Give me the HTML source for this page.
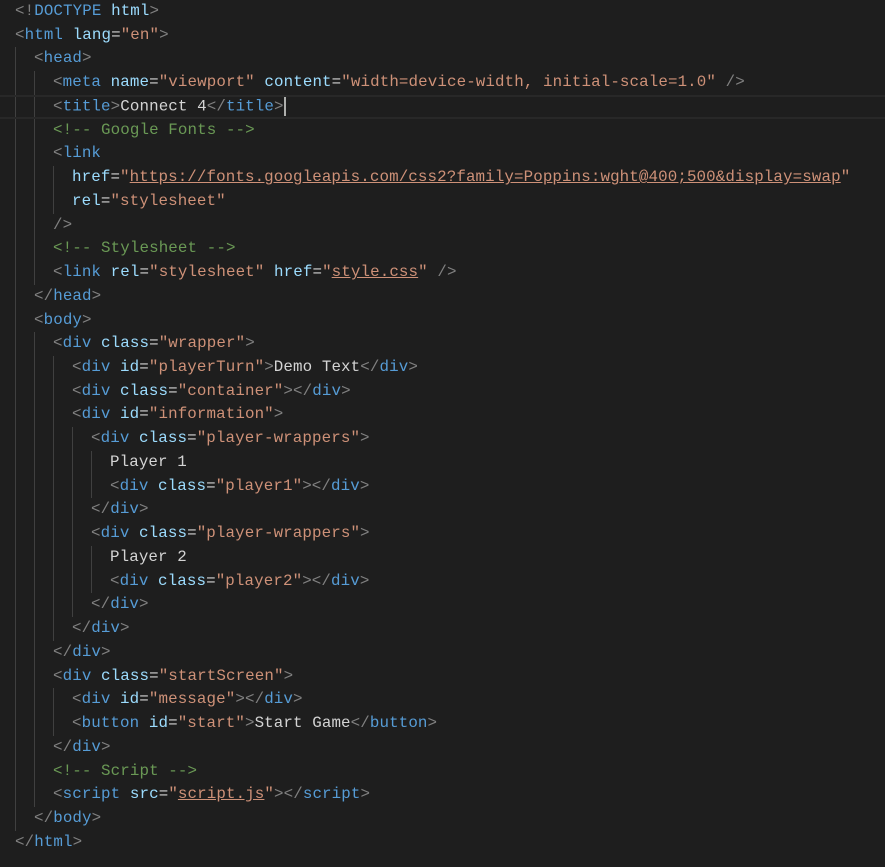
<!DOCTYPE html>
<html><head><style>
body{margin:0;background:#1e1e1e;width:885px;height:867px;overflow:hidden;}
#c{position:absolute;left:0;top:0px;font-family:"Liberation Mono",monospace;font-size:15.83px;letter-spacing:0.11px;line-height:23.74px;color:#d4d4d4;}
.l{height:23.74px;padding-left:15px;position:relative;box-sizing:border-box;white-space:pre}
.cur{border-top:2px solid #282828;border-bottom:2px solid #282828;width:885px;line-height:19.74px}
.i{display:inline-block;width:19px;letter-spacing:0;height:23.74px;vertical-align:top;box-shadow:inset 1px 0 0 #404040}
.cur .i{height:19.74px}
.p{color:#808080}.t{color:#569cd6}.a{color:#9cdcfe}.s{color:#ce9178}.c{color:#6a9955}
.u{text-decoration:underline}
.caret{display:inline-block;width:2px;height:19px;background:#aeafad;vertical-align:middle}
</style></head><body><div id="c"><div class="l"><span class="p">&lt;!</span><span class="t">DOCTYPE</span> <span class="a">html</span><span class="p">&gt;</span></div><div class="l"><span class="p">&lt;</span><span class="t">html</span> <span class="a">lang</span>=<span class="s">"en"</span><span class="p">&gt;</span></div><div class="l"><span class="i"></span><span class="p">&lt;</span><span class="t">head</span><span class="p">&gt;</span></div><div class="l"><span class="i"></span><span class="i"></span><span class="p">&lt;</span><span class="t">meta</span> <span class="a">name</span>=<span class="s">"viewport"</span> <span class="a">content</span>=<span class="s">"width=device-width, initial-scale=1.0"</span> <span class="p">/&gt;</span></div><div class="l cur"><span class="i"></span><span class="i"></span><span class="p">&lt;</span><span class="t">title</span><span class="p">&gt;</span>Connect 4<span class="p">&lt;/</span><span class="t">title</span><span class="p">&gt;</span><span class="caret"></span></div><div class="l"><span class="i"></span><span class="i"></span><span class="c">&lt;!-- Google Fonts --&gt;</span></div><div class="l"><span class="i"></span><span class="i"></span><span class="p">&lt;</span><span class="t">link</span></div><div class="l"><span class="i"></span><span class="i"></span><span class="i"></span><span class="a">href</span>=<span class="s">"<span class="u">https://fonts.googleapis.com/css2?family=Poppins:wght@400;500&amp;display=swap</span>"</span></div><div class="l"><span class="i"></span><span class="i"></span><span class="i"></span><span class="a">rel</span>=<span class="s">"stylesheet"</span></div><div class="l"><span class="i"></span><span class="i"></span><span class="p">/&gt;</span></div><div class="l"><span class="i"></span><span class="i"></span><span class="c">&lt;!-- Stylesheet --&gt;</span></div><div class="l"><span class="i"></span><span class="i"></span><span class="p">&lt;</span><span class="t">link</span> <span class="a">rel</span>=<span class="s">"stylesheet"</span> <span class="a">href</span>=<span class="s">"<span class="u">style.css</span>"</span> <span class="p">/&gt;</span></div><div class="l"><span class="i"></span><span class="p">&lt;/</span><span class="t">head</span><span class="p">&gt;</span></div><div class="l"><span class="i"></span><span class="p">&lt;</span><span class="t">body</span><span class="p">&gt;</span></div><div class="l"><span class="i"></span><span class="i"></span><span class="p">&lt;</span><span class="t">div</span> <span class="a">class</span>=<span class="s">"wrapper"</span><span class="p">&gt;</span></div><div class="l"><span class="i"></span><span class="i"></span><span class="i"></span><span class="p">&lt;</span><span class="t">div</span> <span class="a">id</span>=<span class="s">"playerTurn"</span><span class="p">&gt;</span>Demo Text<span class="p">&lt;/</span><span class="t">div</span><span class="p">&gt;</span></div><div class="l"><span class="i"></span><span class="i"></span><span class="i"></span><span class="p">&lt;</span><span class="t">div</span> <span class="a">class</span>=<span class="s">"container"</span><span class="p">&gt;&lt;/</span><span class="t">div</span><span class="p">&gt;</span></div><div class="l"><span class="i"></span><span class="i"></span><span class="i"></span><span class="p">&lt;</span><span class="t">div</span> <span class="a">id</span>=<span class="s">"information"</span><span class="p">&gt;</span></div><div class="l"><span class="i"></span><span class="i"></span><span class="i"></span><span class="i"></span><span class="p">&lt;</span><span class="t">div</span> <span class="a">class</span>=<span class="s">"player-wrappers"</span><span class="p">&gt;</span></div><div class="l"><span class="i"></span><span class="i"></span><span class="i"></span><span class="i"></span><span class="i"></span>Player 1</div><div class="l"><span class="i"></span><span class="i"></span><span class="i"></span><span class="i"></span><span class="i"></span><span class="p">&lt;</span><span class="t">div</span> <span class="a">class</span>=<span class="s">"player1"</span><span class="p">&gt;&lt;/</span><span class="t">div</span><span class="p">&gt;</span></div><div class="l"><span class="i"></span><span class="i"></span><span class="i"></span><span class="i"></span><span class="p">&lt;/</span><span class="t">div</span><span class="p">&gt;</span></div><div class="l"><span class="i"></span><span class="i"></span><span class="i"></span><span class="i"></span><span class="p">&lt;</span><span class="t">div</span> <span class="a">class</span>=<span class="s">"player-wrappers"</span><span class="p">&gt;</span></div><div class="l"><span class="i"></span><span class="i"></span><span class="i"></span><span class="i"></span><span class="i"></span>Player 2</div><div class="l"><span class="i"></span><span class="i"></span><span class="i"></span><span class="i"></span><span class="i"></span><span class="p">&lt;</span><span class="t">div</span> <span class="a">class</span>=<span class="s">"player2"</span><span class="p">&gt;&lt;/</span><span class="t">div</span><span class="p">&gt;</span></div><div class="l"><span class="i"></span><span class="i"></span><span class="i"></span><span class="i"></span><span class="p">&lt;/</span><span class="t">div</span><span class="p">&gt;</span></div><div class="l"><span class="i"></span><span class="i"></span><span class="i"></span><span class="p">&lt;/</span><span class="t">div</span><span class="p">&gt;</span></div><div class="l"><span class="i"></span><span class="i"></span><span class="p">&lt;/</span><span class="t">div</span><span class="p">&gt;</span></div><div class="l"><span class="i"></span><span class="i"></span><span class="p">&lt;</span><span class="t">div</span> <span class="a">class</span>=<span class="s">"startScreen"</span><span class="p">&gt;</span></div><div class="l"><span class="i"></span><span class="i"></span><span class="i"></span><span class="p">&lt;</span><span class="t">div</span> <span class="a">id</span>=<span class="s">"message"</span><span class="p">&gt;&lt;/</span><span class="t">div</span><span class="p">&gt;</span></div><div class="l"><span class="i"></span><span class="i"></span><span class="i"></span><span class="p">&lt;</span><span class="t">button</span> <span class="a">id</span>=<span class="s">"start"</span><span class="p">&gt;</span>Start Game<span class="p">&lt;/</span><span class="t">button</span><span class="p">&gt;</span></div><div class="l"><span class="i"></span><span class="i"></span><span class="p">&lt;/</span><span class="t">div</span><span class="p">&gt;</span></div><div class="l"><span class="i"></span><span class="i"></span><span class="c">&lt;!-- Script --&gt;</span></div><div class="l"><span class="i"></span><span class="i"></span><span class="p">&lt;</span><span class="t">script</span> <span class="a">src</span>=<span class="s">"<span class="u">script.js</span>"</span><span class="p">&gt;&lt;/</span><span class="t">script</span><span class="p">&gt;</span></div><div class="l"><span class="i"></span><span class="p">&lt;/</span><span class="t">body</span><span class="p">&gt;</span></div><div class="l"><span class="p">&lt;/</span><span class="t">html</span><span class="p">&gt;</span></div></div></body></html>
